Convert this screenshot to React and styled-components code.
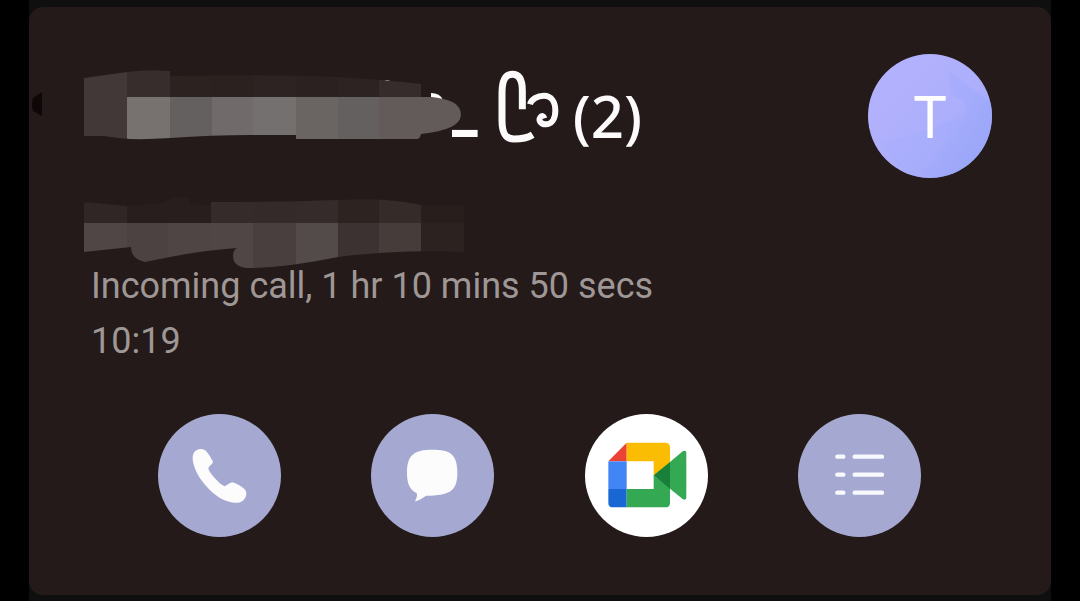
import { createGlobalStyle, styled } from 'styled-components';

const GlobalStyle = createGlobalStyle`
  * {
    box-sizing: border-box;
  }
  body {
    margin: 0;
    background-color: #000;
    font-family: Roboto, 'Noto Sans', sans-serif;
  }
`;

const Screen = styled.main`
  padding: 0 29px;
  min-height: 100vh;
`;
const Backdrop = styled.div`
  padding: 7px 0 6px;
  background-color: #0f0f0f;
`;
const Card = styled.article`
  position: relative;
  padding: 47px 59px 58px 55px;
  border-radius: 14px;
  background-color: #241a19;
`;
const EdgeHandle = styled.svg`
  position: absolute;
  left: 2px;
  top: 84px;
  width: 12px;
  height: 26px;
`;
const Header = styled.header`
  display: flex;
  align-items: center;
  justify-content: space-between;
  height: 124px;
`;
const Name = styled.h1`
  display: flex;
  align-items: center;
  margin: 0;
  font-family: 'Noto Sans', sans-serif;
  font-size: 58px;
  font-weight: 500;
  line-height: 124px;
  color: #fcfafa;
`;
const NameSmudge = styled.svg`
  width: 368px;
  height: 124px;
  overflow: visible;
`;
const Underscore = styled.span`
  align-self: flex-start;
  font-family: Roboto, sans-serif;
  font-weight: 900;
  line-height: 112px;
`;
const Heart = styled.svg`
  width: 62px;
  height: 74px;
  margin: 0 13px 18px 20px;
`;
const Avatar = styled.div`
  position: relative;
  width: 124px;
  height: 124px;
  flex-shrink: 0;
  border-radius: 50%;
  overflow: hidden;
  color: #fff;
  font-family: 'Noto Sans', sans-serif;
  font-size: 58px;
  line-height: 124px;
  text-align: center;
`;
const AvatarArt = styled.svg`
  position: absolute;
  inset: 0;
`;
const Initial = styled.span`
  position: relative;
`;
const NumberSmudge = styled.svg`
  display: block;
  width: 380px;
  height: 63px;
  margin-top: 18px;
  overflow: visible;
`;
const Detail = styled.p`
  display: block;
  margin: 0;
  padding-left: 7px;
  font-size: 36px;
  line-height: 55px;
  color: #9f9795;
`;
const Actions = styled.nav`
  display: flex;
  justify-content: space-between;
  margin-top: 45px;
  padding: 0 71px 0 74px;
`;
const Action = styled.button`
  width: 123px;
  height: 123px;
  padding: 0;
  border: 0;
  border-radius: 50%;
  background-color: ${({ $color }) => $color || '#a5a9d2'};
  cursor: pointer;
`;
const ActionIcon = styled.svg`
  display: block;
  width: 123px;
  height: 123px;
`;

const nameBlocks = [
  { x: 84, w: 43, top: '#423837', bottom: '#423837' },
  { x: 127, w: 43, top: '#372d2c', bottom: '#777170' },
  { x: 170, w: 42, top: '#2c2220', bottom: '#656060' },
  { x: 212, w: 41, top: '#2b211f', bottom: '#706b6a' },
  { x: 253, w: 43, top: '#2d2322', bottom: '#757070' },
  { x: 296, w: 42, top: '#2b2120', bottom: '#6a6563' },
  { x: 338, w: 41, top: '#2d2322', bottom: '#656060' },
  { x: 379, w: 42, top: '#362c2b', bottom: '#635a5a' },
  { x: 421, w: 42, top: '#241a19', bottom: '#625b5a' },
];

const numberBlocks = [
  { x: 84, w: 43, top: '#2f2625', bottom: '#4f4645' },
  { x: 127, w: 41, top: '#281e1d', bottom: '#4b4241' },
  { x: 168, w: 43, top: '#281e1d', bottom: '#4e4544' },
  { x: 211, w: 42, top: '#352b2a', bottom: '#4f4645' },
  { x: 253, w: 43, top: '#332a29', bottom: '#493f3e' },
  { x: 296, w: 42, top: '#352b2b', bottom: '#534a4a' },
  { x: 338, w: 41, top: '#2d2422', bottom: '#3c3231' },
  { x: 379, w: 42, top: '#352c2a', bottom: '#463d3b' },
  { x: 421, w: 43, top: '#281f1d', bottom: '#2c2220' },
];

const Blocks = ({ blocks, y, split, end }) =>
  blocks.map(({ x, w, top, bottom }) => (
    <g key={x} shapeRendering="crispEdges">
      <rect x={x} y={y} width={w} height={split - y} fill={top} />
      <rect x={x} y={split} width={w} height={end - split} fill={bottom} />
    </g>
  ));

const App = () => {
  return (
    <>
      <GlobalStyle />
      <Screen>
        <Backdrop>
          <Card>
            <EdgeHandle viewBox="0 0 12 26" aria-hidden="true">
              <path d="M11 1v24L2 20Q0 13 2 7Z" fill="#0f0707" />
            </EdgeHandle>
            <Header>
              <Name>
                <NameSmudge viewBox="84 54 368 124" aria-hidden="true">
                  <clipPath id="name-smudge">
                    <path d="M84 78L127 72Q148 69 170 71V76Q270 74 338 77Q388 80 421 84V97H430Q461 99 461 115Q460 130 421 134Q420 139 417 139H296V135H250Q212 135 170 138Q127 141 104 136H84Z" />
                  </clipPath>
                  <path d="M384 81Q388 79 392 82Z" fill="#fff" />
                  <path d="M431 93Q440 93 443 100L431 97Z" fill="#fff" />
                  <g clipPath="url(#name-smudge)">
                    <Blocks blocks={nameBlocks} y={66} split={97} end={142} />
                  </g>
                </NameSmudge>
                <Underscore>_</Underscore>
                <Heart
                  viewBox="200 60 186 222"
                  fill="none"
                  stroke="#fcfafa"
                  strokeWidth="21"
                  role="img"
                  aria-label="heart"
                >
                  <path d="M273 178V122C273 88 262 73 243 73C220 73 212 92 212 130V210C212 250 222 267 248 267C270 267 288 264 304 254" />
                  <path
                    d="M296 163C300 148 318 137 338 137C360 137 372 156 372 182C372 208 360 223 343 223C328 223 321 211 327 202C331 196 337 198 339 205"
                    strokeWidth="18"
                  />
                </Heart>
                <span>(2)</span>
              </Name>
              <Avatar>
                <AvatarArt viewBox="0 0 124 124" aria-hidden="true">
                  <defs>
                    <linearGradient id="sky" x1="0.2" y1="0.2" x2="0.9" y2="0.85">
                      <stop offset="0" stopColor="#b2b1fd" />
                      <stop offset="0.55" stopColor="#adaffc" />
                      <stop offset="1" stopColor="#98a4f8" />
                    </linearGradient>
                    <linearGradient id="fold" x1="0" y1="0" x2="1" y2="0">
                      <stop offset="0" stopColor="#a6adfb" stopOpacity="0.1" />
                      <stop offset="1" stopColor="#9ca8fa" stopOpacity="0.7" />
                    </linearGradient>
                  </defs>
                  <rect width="124" height="124" fill="url(#sky)" />
                  <path d="M14 90L58 76L98 62V48L82 40V18L124 50V124H54L72 96L80 76Z" fill="url(#fold)" />
                  <path d="M14 90L58 76L98 62L76 88L54 124H40Z" fill="#a7adfb" opacity="0.6" />
                </AvatarArt>
                <Initial>T</Initial>
              </Avatar>
            </Header>
            <NumberSmudge viewBox="84 196 380 63" aria-hidden="true">
              <clipPath id="number-smudge">
                <path d="M84 202L127 206L163 203Q178 193 189 199V204L211 205V202Q280 202 338 200Q385 197 421 205H464V252Q400 249 338 257Q290 267 253 268Q233 269 233 256Q233 250 237 248Q200 251 170 257L145 262Q131 259 131 247L84 252Z" />
              </clipPath>
              <g clipPath="url(#number-smudge)">
                <Blocks blocks={numberBlocks} y={192} split={223} end={270} />
              </g>
            </NumberSmudge>
            <Detail>Incoming call, 1 hr 10 mins 50 secs</Detail>
            <Detail as="time">10:19</Detail>
            <Actions aria-label="Call actions">
              <Action aria-label="Call">
                <ActionIcon viewBox="25 28 369 369" fill="#fcfcfd">
                  <path d="M132 145C140 133 154 130 165 136C174 141 182 158 189 169C192 177 180 182 176 190C176 196 182 205 193 218C206 233 216 241 225 245C232 242 238 235 248 233C260 236 282 248 288 258C294 271 286 286 273 292C259 298 233 293 211 280C183 263 151 228 138 197C130 177 126 158 132 145Z" />
                </ActionIcon>
              </Action>
              <Action aria-label="Message">
                <ActionIcon viewBox="19 28 369 369" fill="#fcfcfd">
                  <path d="M203 135C256 135 278 148 278 204C278 260 255 272 184 273C174 281 164 286 154 290C151 291 151 288 153 285C157 278 158 272 156 265C135 255 127 237 127 204C127 149 150 135 203 135Z" />
                </ActionIcon>
              </Action>
              <Action aria-label="Google Meet" $color="#fff">
                <ActionIcon viewBox="26 28 369 369">
                  <path d="M151 114V170H96Z" fill="#ea4335" />
                  <path d="M151 114H267Q281 114 281 128V178L232 212V170H151Z" fill="#fbbc04" />
                  <path d="M96 170H151V253H96Z" fill="#4285f4" />
                  <path d="M96 253H151V308H110Q96 308 96 294Z" fill="#1967d2" />
                  <path d="M151 253H232V212L281 248V294Q281 308 267 308H151Z" fill="#34a853" />
                  <path d="M281 172L319 140Q330 134 330 145V278Q330 289 319 283L281 252Z" fill="#34a853" />
                  <path d="M232 212L281 172V252Z" fill="#188038" />
                </ActionIcon>
              </Action>
              <Action aria-label="Details">
                <ActionIcon
                  viewBox="24 28 369 369"
                  stroke="#f8f9fe"
                  strokeWidth="13"
                  strokeLinecap="round"
                >
                  <path d="M142 156H160M194 156H276M142 210H160M194 210H276M142 264H160M194 264H276" />
                </ActionIcon>
              </Action>
            </Actions>
          </Card>
        </Backdrop>
      </Screen>
    </>
  );
};

export default App;
